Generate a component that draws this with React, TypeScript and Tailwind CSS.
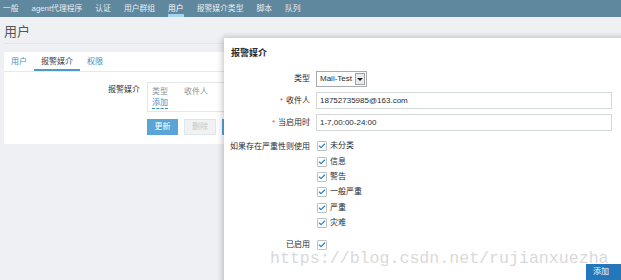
import { Check } from "lucide-react";

const navItems = ["一般", "agent代理程序", "认证", "用户群组", "用户", "报警媒介类型", "脚本", "队列"];
const severities = ["未分类", "信息", "警告", "一般严重", "严重", "灾难"];

function Box() {
  return (
    <span className="flex h-[10px] w-[10px] items-center justify-center rounded-[1px] border border-[#bcc3c7] bg-white">
      <Check className="h-[8px] w-[8px] text-[#1f82c6]" strokeWidth={3.5} />
    </span>
  );
}

function Row({ label, required, children, className = "" }: { label: string; required?: boolean; children: React.ReactNode; className?: string }) {
  return (
    <div className={`flex items-center gap-[6px] ${className}`}>
      <div className="w-[80px] shrink-0 text-right text-[#1f2c33]">
        {required && <span className="mr-[3px] text-[#e0464a]">*</span>}
        {label}
      </div>
      {children}
    </div>
  );
}

export default function App() {
  return (
    <div className="relative h-[280px] w-[621px] overflow-hidden bg-[#eff0f3] font-['Liberation_Sans','Noto_Sans_CJK_SC',sans-serif] text-[8px] leading-none">
      {/* top nav */}
      <div className="flex h-[17px] items-stretch gap-[13px] bg-[#5f889f] pl-[3px] text-[7.8px]">
        {navItems.map((item) => (
          <div
            key={item}
            className={`flex items-center border-b-[3px] pt-[3px] ${
              item === "用户" ? "border-[#a8d3ef] text-white" : "border-transparent text-[#e6edf1]"
            }`}
          >
            {item}
          </div>
        ))}
      </div>

      {/* page */}
      <div className="px-[4px]">
        <div className="flex h-[27px] items-center border-b border-[#e2e5e8] pt-[3px] text-[13px] text-[#50585c]">用户</div>
        <div className="mt-[8px] h-[92px] w-[600px] bg-white">
          <div className="flex h-[20px] border-b border-[#e6e9eb]">
            {["用户", "报警媒介", "权限"].map((t) => (
              <div
                key={t}
                className={`flex items-center border-b-2 px-[7px] pt-[2px] ${
                  t === "报警媒介" ? "border-[#4a9bcc] text-[#3b4246]" : "border-transparent text-[#3d8fc2]"
                }`}
              >
                {t}
              </div>
            ))}
          </div>
          <div className="mt-[10px] flex gap-[7px]">
            <div className="w-[136px] shrink-0 pt-[4px] text-right text-[#2a3338]">报警媒介</div>
            <div>
              <div className="h-[30px] w-[300px] border border-[#e4e7e9] pl-[4px] pt-[5px]">
                <div className="flex text-[#8c9397]">
                  <span className="w-[32px]">类型</span>
                  <span>收件人</span>
                </div>
                <div className="mt-[3px] w-fit border-b border-dashed border-[#3d8fc2] pb-[1px] text-[#3d8fc2]">添加</div>
              </div>
              <div className="mt-[7px] flex gap-[6px]">
                <button className="flex h-[16px] w-[31px] items-center justify-center bg-[#5aa5d6] text-white">更新</button>
                <button className="flex h-[16px] w-[32px] items-center justify-center border border-[#e3e6e8] bg-[#f1f2f3] text-[#c3c8cb]">删除</button>
                <button className="flex h-[16px] w-[31px] items-center justify-center bg-[#5aa5d6] text-white">取消</button>
              </div>
            </div>
          </div>
        </div>
      </div>

      {/* dialog */}
      <div className="absolute left-[224px] top-[38px] h-[260px] w-[410px] bg-white shadow-[-2px_0_6px_rgba(0,0,0,0.16),0_-2px_6px_rgba(0,0,0,0.08)]">
        <div className="flex h-[29px] items-center pl-[7px] pt-[2px] text-[9px] font-bold text-[#222b30]">报警媒介</div>
        <div className="flex flex-col pl-[6px]">
          <Row label="类型" className="mt-[4px] h-[16px]">
            <div className="flex h-[16px] w-[51px] items-center justify-between border border-[#a7abae] bg-white pl-[3px] pr-[1px] text-[#1f2c33]">
              <span>Mail-Test</span>
              <span className="flex h-[12px] w-[10px] items-center justify-center border border-[#9ea3a6] bg-[#e9eaeb]">
                <span className="h-0 w-0 border-x-[3px] border-t-[3px] border-x-transparent border-t-[#222]" />
              </span>
            </div>
          </Row>
          <Row label="收件人" required className="mt-[5px] h-[17px]">
            <div className="flex h-[17px] w-[296px] items-center border border-[#d3d8db] pl-[3px] text-[#1f2c33]">18752735985@163.com</div>
          </Row>
          <Row label="当启用时" required className="mt-[5px] h-[17px]">
            <div className="flex h-[17px] w-[296px] items-center border border-[#d3d8db] pl-[3px] text-[#1f2c33]">1-7,00:00-24:00</div>
          </Row>
          <div className="mt-[7.5px] flex gap-[6px]">
            <div className="w-[80px] shrink-0 pt-[4px] text-right text-[#1f2c33]">如果存在严重性则使用</div>
            <div className="flex flex-col">
              {severities.map((s) => (
                <div key={s} className="flex h-[15.4px] items-center gap-[3px] pl-[1px] text-[#1f2c33]">
                  <Box />
                  <span>{s}</span>
                </div>
              ))}
            </div>
          </div>
          <Row label="已启用" className="mt-[6.5px] h-[15.4px]">
            <span className="pl-[1px]">
              <Box />
            </span>
          </Row>
        </div>
        <div className="mt-[11px] flex pl-[362px]">
          <button className="flex h-[20px] w-[40px] items-center bg-[#2377bb] pb-[3px] pl-[7px] text-white">添加</button>
        </div>
      </div>

      {/* watermark */}
      <div className="pointer-events-none absolute left-[270px] top-[251px] font-['Liberation_Mono',monospace] text-[16.6px] leading-none text-[#d9d9d9]">
        https://blog.csdn.net/rujianxuezha
      </div>
    </div>
  );
}
